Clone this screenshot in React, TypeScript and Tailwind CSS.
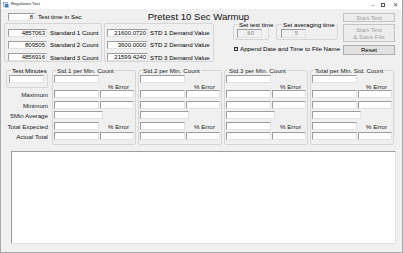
import React from "react";

function TB({
  className = "",
  children,
  disabled = false,
}: {
  className?: string;
  children?: React.ReactNode;
  disabled?: boolean;
}) {
  return (
    <div
      className={
        "h-[8px] shrink-0 border border-t-[#9d9d9d] border-l-[#9d9d9d] border-r-[#e2e2e2] border-b-[#e2e2e2] text-right pr-[1px] leading-[6px] text-[6px] whitespace-nowrap " +
        (disabled ? "bg-[#f0f0f0] text-[#8a8a8a] " : "bg-white text-black ") +
        className
      }
    >
      {children}
    </div>
  );
}

function StdGroup({ title }: { title: string }) {
  return (
    <fieldset className="w-[84px] h-[78px] border border-[#d6d6d6] rounded-[2px] pl-[1px] pr-[1px] m-0 min-w-0">
      <legend className="ml-[2px] px-[1px] leading-[7px] whitespace-nowrap text-[#222]">{title}</legend>
      <div className="flex flex-col">
        <TB className="w-[45px] mt-[1px]" />
        <div className="h-[7px] flex items-center">
          <span className="ml-[54px] text-[#222]">% Error</span>
        </div>
        <div className="flex gap-[1px]">
          <TB className="w-[45px]" />
          <TB className="w-[34px]" />
        </div>
        <div className="flex gap-[1px] mt-[2.5px]">
          <TB className="w-[45px]" />
          <TB className="w-[34px]" />
        </div>
        <TB className="w-[49px] mt-[2.5px]" />
        <div className="flex mt-[2.5px] items-end">
          <TB className="w-[45px]" />
          <span className="ml-[9px] leading-[6px] text-[#222]">% Error</span>
        </div>
        <div className="flex gap-[1px] mt-[2.5px]">
          <TB className="w-[45px]" />
          <TB className="w-[34px]" />
        </div>
      </div>
    </fieldset>
  );
}

export default function App() {
  return (
    <div className="w-[403px] h-[253px] bg-[#f0f0f0] border-l border-r border-b border-[#a8a8a8] flex flex-col overflow-hidden font-['Liberation_Sans',Arial,sans-serif] text-[6.2px] text-black">
      {/* Title bar */}
      <div className="h-[9px] bg-white flex items-center pl-[2px] shrink-0">
        <svg width="6" height="6" viewBox="0 0 6 6">
          <rect x="0.5" y="0.5" width="4" height="4" fill="#dbe8f5" stroke="#5a8ac6" strokeWidth="0.6" />
          <rect x="2" y="2" width="3.5" height="3.5" fill="#3d7fd1" />
        </svg>
        <span className="ml-[2px] text-[4.2px] text-[#222]">Regulation Test</span>
        <div className="ml-auto flex items-center text-[#444]">
          <span className="w-[10px] text-center text-[6px] leading-none">–</span>
          <span className="w-[10px] flex justify-center">
            <span className="w-[4px] h-[4px] border border-[#555]" />
          </span>
          <span className="w-[14px] text-center text-[6px] leading-none">✕</span>
        </div>
      </div>

      {/* Top area */}
      <div className="flex pl-[3px] h-[56px] shrink-0">
        <div className="flex flex-col w-[211px]">
          <div className="flex items-center h-[8px] mt-[4px]">
            <TB className="w-[27px] ml-[4px]">8</TB>
            <span className="ml-[3px] whitespace-nowrap">Test time in Sec</span>
            <span className="ml-[66px] text-[9.6px] whitespace-nowrap text-[#111]">Pretest 10 Sec Warmup</span>
          </div>
          <div className="flex gap-[2px] mt-[2px]">
            <div className="w-[98px] h-[39px] border border-[#d6d6d6] rounded-[2px] flex flex-col gap-[3px] pt-[4px] pl-[3px]">
              {[
                ["4857063", "Standard 1 Count"],
                ["809505", "Standard 2 Count"],
                ["4856916", "Standard 3 Count"],
              ].map(([v, l]) => (
                <div key={l} className="flex items-center">
                  <TB className="w-[39px]">{v}</TB>
                  <span className="ml-[3px] whitespace-nowrap">{l}</span>
                </div>
              ))}
            </div>
            <div className="w-[110px] h-[39px] border border-[#d6d6d6] rounded-[2px] flex flex-col gap-[3px] pt-[4px] pl-[2px]">
              {[
                ["21600.0720", "STD 1 Demand Value"],
                ["3600.0000", "STD 2 Demand Value"],
                ["21599.4240", "STD 3 Demand Value"],
              ].map(([v, l]) => (
                <div key={l} className="flex items-center">
                  <TB className="w-[41px]">{v}</TB>
                  <span className="ml-[2px] whitespace-nowrap">{l}</span>
                </div>
              ))}
            </div>
          </div>
        </div>

        {/* Middle block */}
        <div className="flex flex-col w-[106px] ml-[18px]">
          <div className="flex gap-[7px] mt-[12px]">
            <fieldset className="w-[36px] h-[19px] border border-[#d6d6d6] rounded-[2px] pl-[3px] m-0 min-w-0">
              <legend className="ml-[1px] px-[1px] leading-[7px] whitespace-nowrap">Set test time</legend>
              <TB disabled className="w-[25px] h-[9px] mt-[1px]">
                <span className="mr-[6px]">60</span>
              </TB>
            </fieldset>
            <fieldset className="w-[62px] h-[19px] border border-[#d6d6d6] rounded-[2px] pl-[4px] m-0 min-w-0">
              <legend className="ml-[1px] px-[1px] leading-[7px] whitespace-nowrap">Set averaging time</legend>
              <TB disabled className="w-[25px] h-[9px] mt-[1px]">
                <span className="mr-[6px]">5</span>
              </TB>
            </fieldset>
          </div>
          <div className="flex items-center mt-[4px] ml-[1px]">
            <span className="w-[4px] h-[4px] border border-[#333] bg-white flex items-center justify-center">
              <svg width="3" height="3" viewBox="0 0 3 3">
                <path d="M0.3 1.5 L1.2 2.4 L2.7 0.5" stroke="#222" strokeWidth="0.6" fill="none" />
              </svg>
            </span>
            <span className="ml-[2px] whitespace-nowrap">Append Date and Time to File Name</span>
          </div>
        </div>

        {/* Buttons */}
        <div className="flex flex-col w-[52px] ml-[4px] mt-[4px]">
          <div className="h-[9px] border border-[#c4c4c4] bg-[#ececec] text-[#a3a3a3] flex items-center justify-center">
            Start Test
          </div>
          <div className="h-[18px] mt-[2px] border border-[#c4c4c4] bg-[#ececec] text-[#a3a3a3] flex flex-col items-center justify-center leading-[7px]">
            <span>Start Test</span>
            <span>&amp; Save File</span>
          </div>
          <div className="h-[10px] mt-[3px] border border-[#adadad] bg-[#e1e1e1] flex items-center justify-center">
            Reset
          </div>
        </div>
      </div>

      {/* Bottom groups */}
      <div className="flex pl-[4px] mt-[2px] shrink-0">
        <div className="flex flex-col w-[43px]">
          <fieldset className="w-[42px] h-[21px] border border-[#d6d6d6] rounded-[2px] pl-[2px] m-0 min-w-0 ml-[1px]">
            <legend className="ml-[2px] px-[1px] leading-[7px] whitespace-nowrap">Test Minutes</legend>
            <TB className="w-[35px] mt-[1px]" />
          </fieldset>
          <div className="flex flex-col items-end text-[#222] mt-[3px] leading-[8px] gap-[2.5px]">
            <span>Maximum</span>
            <span>Minimum</span>
            <span>5Min Average</span>
            <span>Total Expected</span>
            <span>Actual Total</span>
          </div>
        </div>
        <div className="flex gap-[2px] ml-[4px]">
          <StdGroup title="Std.1 per Min. Count" />
          <StdGroup title="Std.2 per Min. Count" />
          <StdGroup title="Std.3 per Min. Count" />
          <StdGroup title="Total per Min. Std. Count" />
        </div>
      </div>

      {/* Text area */}
      <div className="ml-[10px] mt-[6px] w-[385px] h-[93px] bg-white border border-t-[#a0a0a0] border-l-[#a0a0a0] border-r-[#e3e3e3] border-b-[#e3e3e3]" />
    </div>
  );
}
